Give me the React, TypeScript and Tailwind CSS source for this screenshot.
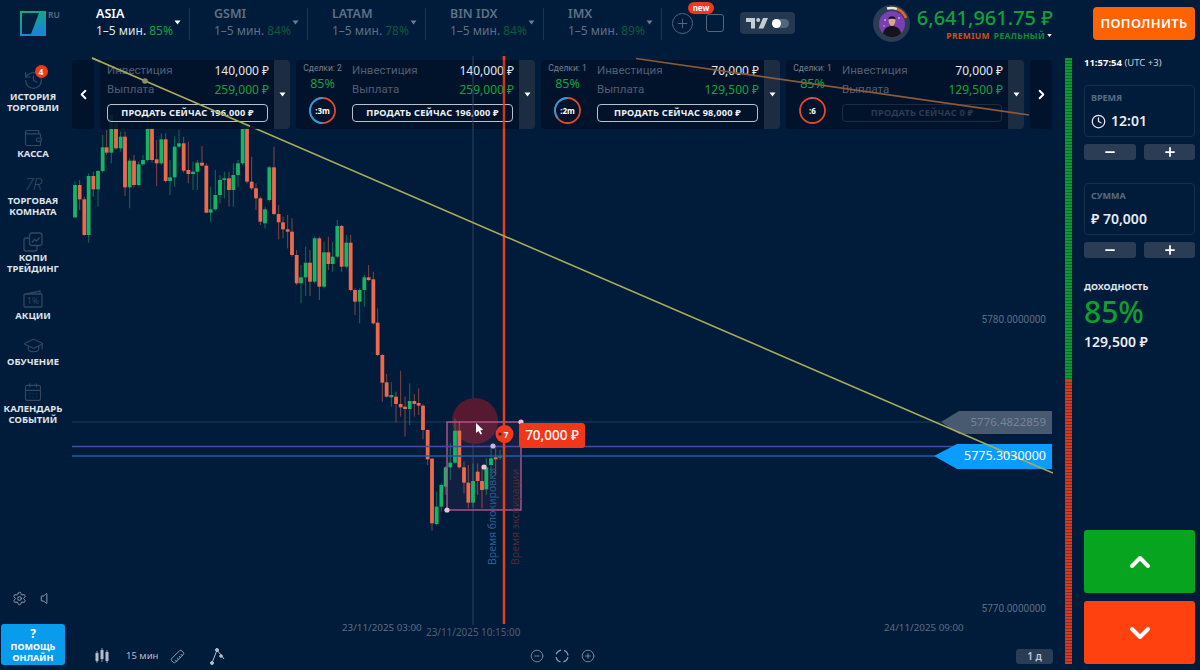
import React from "react";
import { History, Wallet, GraduationCap, CalendarDays, Settings, Volume, Clock, ChevronUp, ChevronDown, ChevronLeft, ChevronRight, Plus, Minus, CirclePlus, CircleMinus, Ruler } from "lucide-react";

type C = [number, number, number, number, number?, number?];
// [frame x, up(1)/down(0), bodyTop, bodyBottom, wickTop, wickBottom]
const a: C[] = [
[15,1,255,352,245,355],[29,0,255,298,240,330],[43,0,298,405,290,408],[56,1,228,405,220,428],[70,0,228,268,215,290],[84,1,213,268,210,320],[98,1,142,213,105,218],[110,0,142,158,90,165],[124,1,45,158,45,190],[138,0,70,145,45,150],[152,1,110,145,95,155],[165,0,110,262,95,288],[179,1,182,262,175,325],[192,0,182,255,165,262],[206,1,193,255,185,258],[219,1,180,193,165,198],[233,1,85,180,70,185],[246,0,85,180,80,188],[260,0,178,190,120,258],[274,1,118,190,100,195],[287,0,118,243,100,248],[300,1,232,243,180,285],[314,1,140,232,110,260],[327,1,130,140,90,145],[341,0,130,212,110,218],[355,0,210,222,125,250],[369,1,215,222,185,270],[382,1,188,215,180,270],[396,0,188,197,138,200],[409,0,197,338,190,340],[422,1,328,338,260,365],[436,1,285,328,210,332],[450,1,240,285,225,310],[463,1,235,240,215,295],[477,0,235,270,215,320],[490,1,225,270,190,320],[504,1,190,225,180,260],[518,1,72,190,72,195],[531,0,72,245,72,250],[545,0,245,265,170,270],[558,0,265,295,250,330],[571,0,295,365,290,375],[585,1,328,370,320,385],[598,1,202,300,198,305],[612,0,202,342,140,346],[626,0,342,367,315,418],[639,0,367,388,350,415],[653,0,388,395,345,445],[666,0,395,465,355,470],[680,0,465,550,450,555],
];
const b: C[] = [
[3,1,172,190,135,250],[17,1,128,172,80,228],[30,0,128,185,90,228],[44,1,55,185,50,190],[58,0,55,200,50,240],[72,1,97,200,65,205],[85,0,97,132,50,150],[98,1,110,132,65,155],[112,1,18,110,0,115],[125,0,18,140,15,155],[139,1,68,140,45,145],[152,0,68,210,45,214],[165,0,210,245,205,285],[179,1,210,245,205,310],[193,1,172,210,165,260],[206,0,172,180,135,184],[220,0,178,310,155,314],[233,0,308,405,265,408],[247,0,405,488,402,545],[260,0,487,530,462,533],[274,1,525,532,487,560],[288,0,530,552,515,607],[302,0,552,562,452,590],[315,0,560,567,530,650],[329,1,543,567,490,615],[343,0,543,552,522,590],[356,0,549,557,505,585],[369,0,557,630,553,658],[383,0,630,718,628,735],[396,0,716,910,714,932],
];
const c: C[] = [
[170,1,380,432,335,436],[184,1,315,380,310,395],[197,1,262,320,258,345],[211,1,248,262,190,300],[225,1,152,248,115,252],[238,0,152,262,125,266],[252,0,262,308,245,340],[265,0,308,368,255,385],[279,1,303,368,250,382],[293,0,275,303,250,345],[306,0,303,330,265,385],[319,1,262,328,235,345],[333,1,235,255,205,295],[347,0,232,238,205,285],[360,1,228,232,210,240],
];
const toReal = (f: C[], ox: number, oy: number) =>
  f.map(([x, up, t, bt, wt, wb]) => ({ x: ox + x / 3, up: !!up, t: oy + t / 3, b: oy + bt / 3, wt: oy + (wt ?? t) / 3, wb: oy + (wb ?? bt) / 3 }));
const candles = [...toReal(a, 70, 100), ...toReal(b, 300, 220), ...toReal(c, 380, 380)];

const Caret = ({ className = "" }: { className?: string }) => (
  <svg width="7" height="5" viewBox="0 0 7 5" className={className}><path d="M0.5 0.5h6L3.5 4.5z" fill="currentColor" /></svg>
);

const Tab = ({ name, pct, active }: { name: string; pct: string; active?: boolean }) => (
  <div className="w-[118px] shrink-0 pr-[24px]">
    <div className="flex h-[32px] mt-[8px] border-r border-[#1d3450]">
      <div className="flex flex-col">
        <span className={`text-[12.5px] leading-[12px] font-semibold ${active ? "text-white" : "text-[#5f7084]"}`}>{name}</span>
        <span className={`text-[12px] leading-[12px] mt-[5px] whitespace-nowrap ${active ? "text-[#dfe5ea]" : "text-[#5f7084]"}`}>
          1–5 мин. <span className={active ? "text-[#12a33b]" : "text-[#0c5a3a]"}>{pct}</span>
        </span>
      </div>
      <Caret className={`ml-auto mr-[8px] mt-[12px] ${active ? "text-white" : "text-[#6d7d90]"}`} />
    </div>
  </div>
);

const Ring = ({ blue, label }: { blue: number; label: string }) => {
  const r = 12.5, len = 2 * Math.PI * r, d = blue * len;
  return (
    <div className="relative w-[29px] h-[29px]">
      <svg width="29" height="29" viewBox="0 0 29 29" className="-rotate-90">
        <circle cx="14.5" cy="14.5" r={r} fill="none" stroke="#e2482c" strokeWidth="1.8" />
        <circle cx="14.5" cy="14.5" r={r} fill="none" stroke="#1f9fe8" strokeWidth="1.8" strokeDasharray={`${d} ${len - d}`} strokeDashoffset={d} />
      </svg>
      <span className="absolute inset-0 flex items-center justify-center text-[8px] font-bold text-white">{label}</span>
    </div>
  );
};

const Card = ({ deals, ring, blue, inv, pay, sell, disabled, width }: { deals?: string; ring?: string; blue?: number; inv: string; pay: string; sell: string; disabled?: boolean; width: string }) => (
  <div className={`flex h-[69px] rounded-[4px] bg-[#01132a]/90 overflow-hidden shrink-0 ${width}`}>
    {deals && (
      <div className="w-[49px] shrink-0 flex flex-col items-center pt-[3px] pl-[4px]">
        <span className="text-[8.5px] leading-[11px] text-[#75818f] whitespace-nowrap font-['Roboto',sans-serif]">{deals}</span>
        <span className="text-[12.5px] leading-[15px] mt-[2px] text-[#12a33b]">85%</span>
        <div className="mt-[5px]"><Ring blue={blue ?? 0} label={ring ?? ""} /></div>
      </div>
    )}
    <div className="flex-1 min-w-0 flex flex-col pr-[5px] pl-[7px] pt-[2px]">
      <div className="flex justify-between items-center h-[18px]"><span className="text-[#4f5f73] text-[11.5px] font-['Roboto',sans-serif]">Инвестиция</span><span className="text-[#e4e8ec] text-[12px]">{inv}</span></div>
      <div className="flex justify-between items-center h-[18px] mt-[1px]"><span className="text-[#4f5f73] text-[11.5px] font-['Roboto',sans-serif]">Выплата</span><span className="text-[#12a33b] text-[12px]">{pay}</span></div>
      <div className={`mt-[5px] h-[18px] mr-[1px] rounded-[4px] border flex items-center justify-center text-[9.2px] font-bold tracking-[0.2px] ${disabled ? "border-[#1c2c40] text-[#2c3b4e]" : "border-[#b9c2cc] text-[#eef1f4]"}`}>ПРОДАТЬ СЕЙЧАС {sell} ₽</div>
    </div>
    <div className="w-[16px] shrink-0 bg-[#1c2d42] flex items-center justify-center text-white"><Caret /></div>
  </div>
);

const Item = ({ icon, lines }: { icon: React.ReactNode; lines: string[] }) => (
  <div className="flex flex-col items-center w-full">
    <div className="h-[20.5px] flex items-center justify-center text-[#33475f] relative">{icon}</div>
    <div className="text-center text-[9.5px] leading-[11px] font-bold text-[#dfe4e9] whitespace-nowrap">
      {lines.map((l) => <div key={l}>{l}</div>)}
    </div>
  </div>
);

const Stepper = () => (
  <div className="flex justify-between mt-[7px]">
    <div className="w-[52px] h-[16px] rounded-[3px] bg-[#2a3d54] flex items-center justify-center text-white"><Minus size={14} strokeWidth={3} /></div>
    <div className="w-[51px] h-[16px] rounded-[3px] bg-[#2a3d54] flex items-center justify-center text-white"><Plus size={14} strokeWidth={3} /></div>
  </div>
);

const ValueBox = ({ label, children }: { label: string; children: React.ReactNode }) => (
  <div className="h-[52px] rounded-[4px] border border-[#12304f] px-[6px] pt-[6px]">
    <div className="text-[9px] leading-[12px] font-bold text-[#5a6b80]">{label}</div>
    <div className="mt-[7px] flex items-center gap-[5px] text-[14px] leading-[20px] font-semibold text-[#e8ecef]">{children}</div>
  </div>
);

export default function App() {
  return (
    <div className="w-[1200px] h-[670px] overflow-hidden flex flex-col bg-[#011b3a] text-white font-['Noto_Sans',sans-serif]">
      <header className="h-[56px] shrink-0 flex items-start">
        <div className="w-[96px] shrink-0 flex pl-[20px] pt-[11px]">
          <svg width="26" height="25" viewBox="0 0 26 25">
            <defs>
              <linearGradient id="lg" x1="0" y1="0" x2="0.3" y2="1"><stop offset="0" stopColor="#16b06a" /><stop offset="1" stopColor="#1b84d6" /></linearGradient>
            </defs>
            <rect width="26" height="25" fill="url(#lg)" />
            <path d="M2 2H19L11 23H2z" fill="#03203f" />
          </svg>
          <span className="text-[8.5px] leading-[10px] font-semibold text-[#5a6d85] ml-[2px] mt-[-1px]">RU</span>
        </div>
        <Tab name="ASIA" pct="85%" active />
        <Tab name="GSMI" pct="84%" />
        <Tab name="LATAM" pct="78%" />
        <Tab name="BIN IDX" pct="84%" />
        <Tab name="IMX" pct="89%" />
        <div className="flex items-start ml-[-14px]">
          <div className="mt-[13px] w-[21px] h-[21px] rounded-full border-[1.5px] border-[#53667d] flex items-center justify-center text-[#53667d]"><Plus size={15} strokeWidth={1.6} /></div>
          <div className="relative mt-[14px] ml-[13px] w-[18px] h-[18px] rounded-[3px] border-[1.5px] border-[#53667d]">
            <span className="absolute left-[-19px] top-[-13px] w-[26px] h-[12px] rounded-full bg-[#ef3a1c] text-[8px] leading-[11px] font-bold text-center text-white">new</span>
          </div>
          <div className="mt-[12px] ml-[16px] w-[55px] h-[22px] rounded-[4px] bg-[#24384f] flex items-center justify-center gap-[4px]">
            <svg width="22" height="11" viewBox="0 0 22 11" fill="#c4ccd6"><path d="M0 0h9v10.500H5V4H0z" /><circle cx="12.200" cy="2" r="2" /><path d="M17 0h5l-4.500 10.500h-5z" /></svg>
            <span className="w-[17px] h-[9px] rounded-full bg-[#53667d] relative"><span className="absolute left-0 top-0 w-[9px] h-[9px] rounded-full bg-white" /></span>
          </div>
        </div>
        <div className="ml-[78px] mt-[5px] relative w-[37px] h-[37px] rounded-full bg-[#2a3d55] flex items-center justify-center">
          <svg width="26" height="26" viewBox="0 0 26 26">
            <circle cx="13" cy="13" r="13" fill="#7a3fb0" />
            <circle cx="6" cy="9" r="1" fill="#c9a6e8" /><circle cx="20" cy="7" r="1" fill="#c9a6e8" /><circle cx="5" cy="15" r="0.800" fill="#c9a6e8" />
            <path d="M9.500 8c0 4 1.500 7 3.500 7s3.500-3 3.500-7z" fill="#d8a888" />
            <path d="M9.300 8.500c-.3-4.500 7.700-4.500 7.400 0-2-1.200-5.400-1.200-7.400 0z" fill="#17141c" />
            <path d="M4 22.500c1-5.500 5-7.500 9-7.500s8 2 9 7.500a13 13 0 0 1-18 0z" fill="#15131b" />
          </svg>
          <svg width="37" height="37" viewBox="0 0 37 37" className="absolute inset-0">
            <path d="M14 3.500A15.500 15.500 0 0 1 24 4" fill="none" stroke="#f1e4dc" strokeWidth="2.500" />
            <path d="M24 4A15.500 15.500 0 0 1 33 13" fill="none" stroke="#e8622c" strokeWidth="2.500" />
          </svg>
        </div>
        <div className="ml-[4px] w-[139px] shrink-0 flex flex-col items-end">
          <span className="text-[20px] leading-[24px] mt-[6px] font-medium text-[#10a03a] whitespace-nowrap">6,641,961.75 ₽</span>
          <span className="flex items-center text-[8.5px] leading-[11px] font-bold tracking-[0.3px] whitespace-nowrap">
            <span className="text-[#c8501c]">PREMIUM</span>
            <span className="text-[#0e8a34] ml-[4px]">РЕАЛЬНЫЙ</span>
            <Caret className="text-white ml-[1px] scale-75" />
          </span>
        </div>
        <button className="ml-[40px] mt-[7px] w-[102px] h-[33px] rounded-[4px] bg-[#ff6200] text-[13px] font-semibold tracking-[0.3px] text-white">ПОПОЛНИТЬ</button>
      </header>

      <div className="flex-1 min-h-0 flex">
        <aside className="w-[72px] shrink-0 flex flex-col pt-[14px] pb-[5px] pr-[6px]">
          <div className="flex flex-col gap-[15px]">
            <Item
              icon={<><History size={21} strokeWidth={1.4} /><span className="absolute left-[12px] top-[-5px] w-[13px] h-[13px] rounded-full bg-[#ef3a1c] text-[8.5px] leading-[13px] font-bold text-white text-center">4</span></>}
              lines={["ИСТОРИЯ", "ТОРГОВЛИ"]}
            />
            <Item icon={<Wallet size={20} strokeWidth={1.4} />} lines={["КАССА"]} />
            <Item icon={<span className="text-[17px] italic font-light tracking-[-1px] leading-[16px] h-[16px]">7R</span>} lines={["ТОРГОВАЯ", "КОМНАТА"]} />
            <Item
              icon={<svg width="20" height="20" viewBox="0 0 20 20" fill="none" stroke="currentColor" strokeWidth="1.3"><rect x="6.500" y="1" width="12.500" height="12.500" rx="2.500" /><path d="M6.500 6H3a2 2 0 0 0-2 2v9a2 2 0 0 0 2 2h9a2 2 0 0 0 2-2v-3.500" /><path d="M9 10.500l2.500-3 2 1.500 3-3.500" /></svg>}
              lines={["КОПИ", "ТРЕЙДИНГ"]}
            />
            <Item
              icon={<svg width="20" height="18" viewBox="0 0 20 18" fill="none" stroke="currentColor" strokeWidth="1.3"><path d="M3 4l14-3v3" /><rect x="1" y="4" width="18" height="13" rx="1" /><text x="10" y="14" fontSize="8.500" textAnchor="middle" fill="currentColor" stroke="none">1%</text></svg>}
              lines={["АКЦИИ"]}
            />
            <Item icon={<GraduationCap size={21} strokeWidth={1.3} />} lines={["ОБУЧЕНИЕ"]} />
            <Item icon={<CalendarDays size={20} strokeWidth={1.3} />} lines={["КАЛЕНДАРЬ", "СОБЫТИЙ"]} />
          </div>
          <div className="mt-auto flex items-center pl-[12px] gap-[13px] text-[#aeb8c4]">
            <Settings size={15} strokeWidth={1.3} />
            <Volume size={15} strokeWidth={1.3} />
          </div>
          <div className="mt-[18px] ml-[1px] w-[64px] h-[41px] rounded-[3px] bg-[#0a9cec] flex flex-col items-center justify-center text-[9px] leading-[11px] font-bold text-white">
            <span className="text-[12px] leading-[14px] font-bold">?</span>
            <span>ПОМОЩЬ</span>
            <span>ОНЛАЙН</span>
          </div>
        </aside>

        <main className="relative w-[981px] shrink-0 text-[#5e6e82]">
          <svg className="absolute inset-0" width="981" height="614" viewBox="72 56 981 614">
            <line x1="72" x2="1000" y1="422" y2="422" stroke="#0f3550" strokeWidth="1.5" />
            <line x1="473" x2="473" y1="56" y2="625" stroke="#2a4563" strokeWidth="1" />
            <circle cx="475" cy="421" r="23" fill="#561a30" />
            <rect x="447" y="422" width="74" height="88" fill="#8a4a7a" fillOpacity="0.12" />
            {candles.map((k, i) => {
              const col = k.up ? "#16b566" : "#ec6a4b";
              return (
                <g key={i}>
                  <line x1={k.x} x2={k.x} y1={k.wt} y2={k.wb} stroke={col} strokeOpacity="0.55" strokeWidth="1" />
                  <rect x={k.x - 1.9} y={k.t} width="3.800" height={Math.max(k.b - k.t, 1.5)} fill={col} />
                </g>
              );
            })}
            <rect x="447" y="422" width="74" height="88" fill="none" stroke="#b4558f" strokeWidth="1.4" />
            <line x1="72" x2="958" y1="446.500" y2="446.500" stroke="#4b4aa3" strokeWidth="1.5" />
            <line x1="72" x2="940" y1="456" y2="456" stroke="#1b5fa6" strokeWidth="1.5" />
            <text transform="translate(496 565) rotate(-90)" fontSize="10.500" fill="#2c5f90">Время блокировки</text>
            <text transform="translate(519 565) rotate(-90)" fontSize="10.500" fill="#4a2d32">Время экспирации</text>
            <line x1="504" x2="504" y1="56" y2="624" stroke="#e5401c" strokeWidth="2.500" />
            <circle cx="521" cy="422" r="2.600" fill="#f2bfd4" />
            <circle cx="447" cy="510" r="2.600" fill="#f2bfd4" />
            <circle cx="493" cy="446" r="2.600" fill="#c8b8e0" />
            <circle cx="484" cy="467" r="2.600" fill="#f2bfd4" />
            <path d="M476 423l0 10 2.500-2 2 3.500 1.500-.8-1.800-3.400 3-.3z" fill="#fff" />
            <circle cx="504.500" cy="434" r="9" fill="#f0391b" />
            <circle cx="500" cy="434" r="1.600" fill="#3a1010" />
            <text x="506" y="437.500" fontSize="8" fontWeight="700" fill="#fff" textAnchor="middle">7</text>
            <path d="M941 422l18-11h93v23h-93z" fill="#475a70" />
            <path d="M934 456l23-12h95v25h-95z" fill="#0a9cff" />
            <line x1="92" y1="58" x2="1053" y2="473" stroke="#a8ab5a" strokeWidth="1.600" />
          </svg>

          <div className="absolute left-[447px] top-[367px] w-[66px] h-[25px] rounded-[3px] bg-[#f2361a] flex items-center justify-center text-[13.5px] font-medium text-white whitespace-nowrap">70,000 ₽</div>
          <span className="absolute right-[7px] top-[257px] text-[10px] leading-[14px] font-['Roboto',sans-serif]">5780.0000000</span>
          <span className="absolute right-[7px] top-[546px] text-[10px] leading-[14px] font-['Roboto',sans-serif]">5770.0000000</span>
          <span className="absolute right-[7px] top-[359px] text-[11.5px] leading-[14px] text-[#76859a]">5776.4822859</span>
          <span className="absolute right-[7px] top-[393px] text-[12.5px] leading-[14px] text-white">5775.3030000</span>
          <span className="absolute left-[270px] top-[565px] text-[9.8px] leading-[14px]">23/11/2025 03:00</span>
          <span className="absolute left-[354px] top-[569px] text-[9.9px] leading-[14px] text-[#4f6076]">23/11/2025 10:15:00</span>
          <span className="absolute left-[812px] top-[565px] text-[9.8px] leading-[14px]">24/11/2025 09:00</span>

          <div className="absolute left-0 top-[4px] flex gap-[6px] w-full">
            <div className="w-[22px] h-[69px] rounded-[4px] bg-[#01132a]/90 flex items-center justify-center text-white shrink-0"><ChevronLeft size={15} strokeWidth={3} /></div>
            <Card inv="140,000 ₽" pay="259,000 ₽" sell="196,000" width="w-[190px]" />
            <Card deals="Сделки: 2" ring=":3m" blue={0.5} inv="140,000 ₽" pay="259,000 ₽" sell="196,000" width="w-[239px]" />
            <Card deals="Сделки: 1" ring=":2m" blue={0.36} inv="70,000 ₽" pay="129,500 ₽" sell="98,000" width="w-[239px]" />
            <Card deals="Сделки: 1" ring=":6" blue={0.03} inv="70,000 ₽" pay="129,500 ₽" sell="0" disabled width="w-[238px]" />
            <div className="w-[22px] h-[69px] rounded-[4px] bg-[#01132a]/90 flex items-center justify-center text-white shrink-0"><ChevronRight size={15} strokeWidth={3} /></div>
          </div>
          <svg className="absolute inset-0 pointer-events-none" width="981" height="80" viewBox="72 56 981 80">
            <line x1="92" y1="58" x2="250" y2="126.200" stroke="#a8ab5a" strokeWidth="1.600" />
            <circle cx="145" cy="81" r="2.800" fill="#8e9358" />
            <line x1="636" y1="58.500" x2="1029" y2="115" stroke="#8a5a3a" strokeWidth="1.600" />
            <line x1="504" x2="504" y1="56" y2="129" stroke="#e5401c" strokeOpacity="0.85" strokeWidth="2.500" />
            <line x1="473" x2="473" y1="60" y2="129" stroke="#2a4563" strokeWidth="1" />
          </svg>

          <div className="absolute left-0 right-0 bottom-[5px] h-[18px] flex items-center text-[#b4bec9]">
            <svg className="ml-[23px]" width="14" height="16" viewBox="0 0 14 16" fill="currentColor"><rect x="0.500" y="5" width="3" height="8" /><rect x="5.500" y="2" width="3" height="9" /><rect x="10.500" y="4" width="3" height="9" /><path d="M2 3v12M7 0v14M12 2v13" stroke="currentColor" strokeWidth="0.800" /></svg>
            <span className="ml-[17px] text-[9.5px] whitespace-nowrap">15 мин</span>
            <Ruler className="ml-[12px] rotate-90" size={15} strokeWidth={1.3} />
            <svg className="ml-[25px]" width="16" height="17" viewBox="0 0 16 17" fill="none" stroke="currentColor" strokeWidth="1"><path d="M2 15L7 2l7 9" /><circle cx="2" cy="15" r="1.500" fill="currentColor" /><circle cx="7" cy="2" r="1.500" fill="currentColor" /><circle cx="11" cy="8" r="1.300" fill="currentColor" /></svg>
            <CircleMinus className="ml-[304px] text-[#8a97a6]" size={14} strokeWidth={1.4} />
            <svg className="ml-[11px] text-[#8a97a6]" width="14" height="14" viewBox="0 0 14 14" fill="none" stroke="currentColor" strokeWidth="1.300"><circle cx="7" cy="7" r="6" strokeDasharray="6.500 3" strokeDashoffset="-1.200" /></svg>
            <CirclePlus className="ml-[12px] text-[#8a97a6]" size={14} strokeWidth={1.4} />
            <div className="ml-auto w-[37px] h-[15px] rounded-[3px] bg-[#2a3d54] flex items-center justify-center text-[10px] font-semibold text-[#c5ccd4]">1 д</div>
          </div>
        </main>

        <div className="ml-[12px] mt-[2px] mb-[6px] w-[7px] shrink-0 flex flex-col">
          <div className="h-[322px] bg-[repeating-linear-gradient(to_bottom,#0e9a2e_0,#0e9a2e_2px,#08702a_2px,#08702a_3px)]" />
          <div className="flex-1 bg-[repeating-linear-gradient(to_bottom,#d53a22_0,#d53a22_2px,#8e2a20_2px,#8e2a20_3px)]" />
        </div>

        <aside className="ml-[12px] w-[111px] shrink-0 flex flex-col pb-[6px]">
          <div className="h-[14px] text-[9.5px] leading-[14px] whitespace-nowrap text-[#c8d0d8]"><span className="font-bold text-white">11:57:54</span> (UTC +3)</div>
          <div className="mt-[15px]">
            <ValueBox label="ВРЕМЯ"><Clock size={15} strokeWidth={2} /><span>12:01</span></ValueBox>
          </div>
          <Stepper />
          <div className="mt-[23px]">
            <ValueBox label="СУММА"><span>₽ 70,000</span></ValueBox>
          </div>
          <Stepper />
          <div className="mt-[23px] text-[9px] leading-[12px] font-bold text-[#e3e7eb]">ДОХОДНОСТЬ</div>
          <div className="text-[30px] leading-[38px] font-medium text-[#0ea02e]">85%</div>
          <div className="mt-[2px] text-[14px] leading-[18px] font-semibold text-[#e8ecef]">129,500 ₽</div>
          <div className="mt-auto h-[63px] rounded-[3px] bg-[#07a51f] flex items-center justify-center"><ChevronUp size={32} strokeWidth={3} /></div>
          <div className="mt-[8px] h-[63px] rounded-[3px] bg-[#ff400f] flex items-center justify-center"><ChevronDown size={32} strokeWidth={3} /></div>
        </aside>
      </div>
    </div>
  );
}
